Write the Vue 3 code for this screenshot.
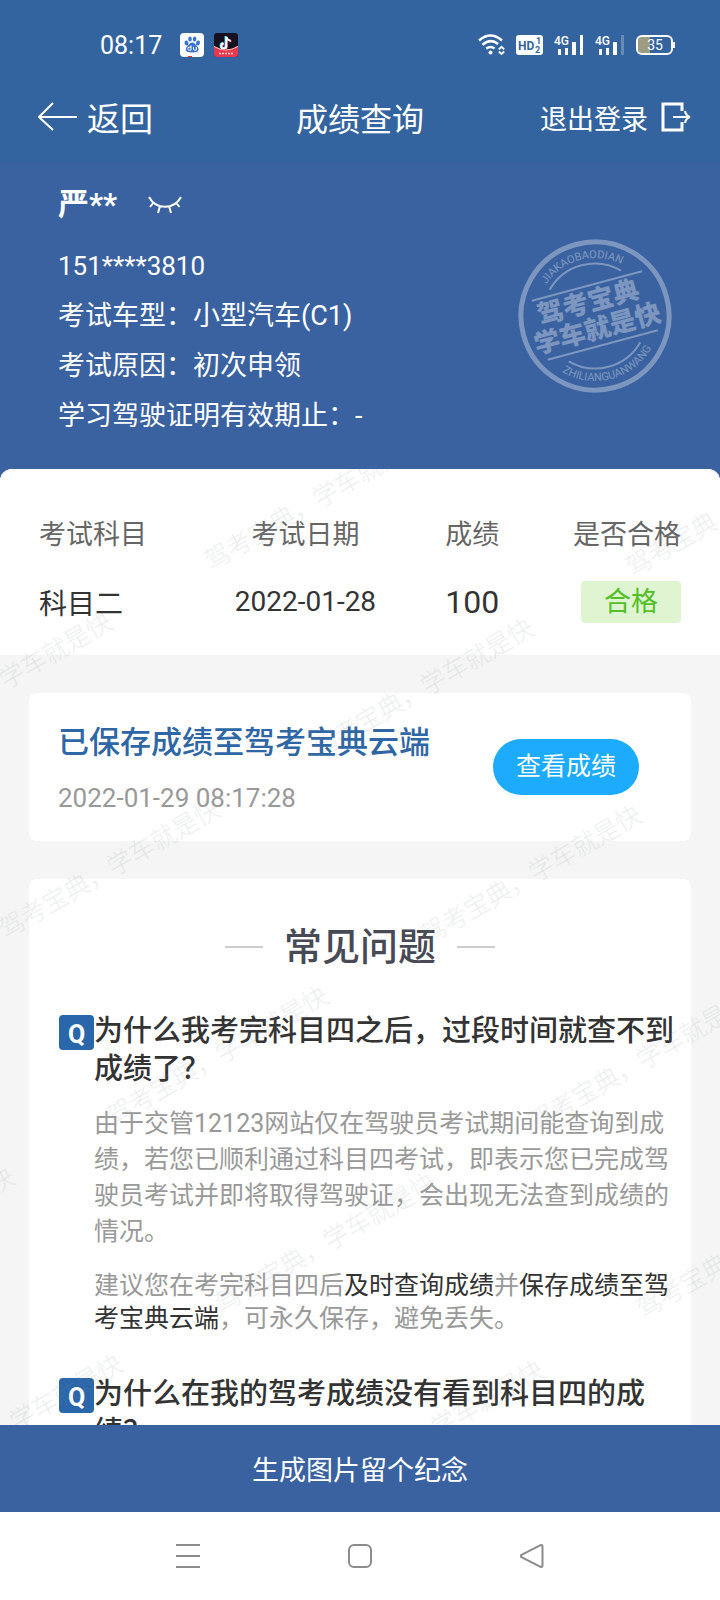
<script setup>
import { ref, computed } from 'vue'

const hidden = ref(true)
const name = computed(() => hidden.value ? '严**' : '严')

const profile = ref([
    '151****3810',
    '考试车型：小型汽车(C1)',
    '考试原因：初次申领',
    '学习驾驶证明有效期止：-'
])

const results = ref([
    { subject: '科目二', date: '2022-01-28', score: 100, status: '合格' }
])

const savedAt = ref('2022-01-29 08:17:28')

function toggleHidden() {
    hidden.value = !hidden.value
}
</script>

<template>
    <div class="app">
        <div class="status">
            <span class="time">08:17</span>
            <svg class="app-icon" width="24" height="24" viewBox="0 0 24 24">
                <rect width="24" height="24" rx="4" fill="#fff" />
                <g fill="#3a73cf">
                    <ellipse cx="6.5" cy="10" rx="1.9" ry="2.6" transform="rotate(-15 6.5 10)" />
                    <ellipse cx="10" cy="6" rx="1.8" ry="2.6" />
                    <ellipse cx="14.6" cy="6" rx="1.8" ry="2.6" />
                    <ellipse cx="18" cy="10" rx="1.9" ry="2.6" transform="rotate(15 18 10)" />
                    <path d="M12.2 9.500c2.300 0 3 2 4.500 3.400 1.600 1.400 2.200 2.500 1.800 4.200-.5 2-2.600 2.300-6.300 2.300s-5.800-.3-6.300-2.300c-.4-1.700.3-2.800 1.800-4.200 1.500-1.400 2.200-3.400 4.500-3.400z" />
                </g>
                <path d="M11 12.500v4.700H9.300a1.500 1.500 0 0 1 0-3H11M13.500 14v2.200c0 .7.500 1 1.200 1h1.600V14" fill="none" stroke="#fff" stroke-width="1" />
                <path d="M8 24v-1h4v1z" fill="#e33" />
            </svg>
            <svg class="app-icon" width="24" height="24" viewBox="0 0 24 24">
                <rect width="24" height="24" rx="3" fill="#17101f" />
                <path d="M0 13q12 7 24 0v8a3 3 0 0 1-3 3H3a3 3 0 0 1-3-3z" fill="#e8384f" />
                <path d="M0 13.500q12 7 24 0" fill="none" stroke="#ffc9b8" stroke-width="1" />
                <path d="M5 20.500h14" stroke="#ffd5cf" stroke-width="1.500" stroke-dasharray="2 1" />
                <g fill="none" stroke-width="2">
                    <path d="M11.500 3v9.500a2.500 2.500 0 1 1-2.500-2.500M11.500 3c.3 2.500 2 4 4.500 4.200" stroke="#29e0e6" />
                    <path d="M13 4v9.500a2.500 2.500 0 1 1-2.500-2.500M13 4c.3 2.500 2 4 4.500 4.200" stroke="#f2355f" />
                    <path d="M12.300 3.500v9.500a2.500 2.500 0 1 1-2.500-2.500M12.300 3.500c.3 2.500 2 4 4.500 4.200" stroke="#fff" />
                </g>
            </svg>

            <div class="signals">
                <svg width="27" height="22" viewBox="0 0 27 22" fill="none" stroke="#fff" stroke-width="2.600">
                    <path d="M1 6.500Q12.500-3.500 24 6.500M4.500 10.800Q12.500 4 20 10M8.300 14.600Q12.500 11.500 16.500 14.500" />
                    <circle cx="12.500" cy="18.500" r="2" fill="#fff" stroke="none" />
                    <path d="M20.800 15.300l2.700-2.500 2.700 2.500M20.800 17.500l2.700 2.500 2.700-2.500" stroke-width="1.800" />
                </svg>
                <svg width="27" height="22" viewBox="0 0 27 22">
                    <rect y="1" width="27" height="20" rx="3" fill="#fff" />
                    <g fill="#35649f" font-family="Roboto, sans-serif" font-weight="700">
                        <text x="2" y="16" font-size="12">HD</text>
                        <text x="20" y="10" font-size="9">1</text>
                        <text x="19" y="19" font-size="9">2</text>
                    </g>
                </svg>
                <svg v-for="bars in [4, 3]" :key="bars" width="30" height="22" viewBox="0 0 30 22" fill="#fff">
                    <text x="0" y="11" font-size="12" font-weight="500" font-family="Roboto, sans-serif">4G</text>
                    <rect x="4" y="15" width="3" height="6" />
                    <rect x="11" y="14" width="3" height="7" />
                    <rect x="18" y="8" width="4" height="13" />
                    <rect x="26" y="1" width="3" height="20" :opacity="bars === 4 ? 1 : 0.25" />
                </svg>
                <svg width="40" height="22" viewBox="0 0 40 22">
                    <path d="M7 2h7v18H7a5 5 0 0 1-5-5V7a5 5 0 0 1 5-5z" fill="#9d9c83" />
                    <rect x="1" y="2" width="35" height="18" rx="5" fill="none" stroke="#fff" stroke-width="2" />
                    <path d="M38 8v6" stroke="#fff" stroke-width="2" />
                    <text x="19" y="16" font-size="14" text-anchor="middle" fill="#fff" font-family="Roboto, sans-serif">35</text>
                </svg>
            </div>
        </div>

        <header class="navbar">
            <button class="back">
                <svg width="40" height="30" viewBox="0 0 40 30" fill="none" stroke="currentColor" stroke-width="2">
                    <path d="M39 15H1M15 1L1 15l14 13" />
                </svg>
                返回
            </button>
            <h1>成绩查询</h1>
            <button class="logout">
                退出登录
                <svg width="30" height="30" viewBox="0 0 30 30" fill="none" stroke="currentColor" stroke-width="3">
                    <path d="M21 9V2H2v26h19v-8" />
                    <path d="M12 15h17M24 9q1 5 5 6q-4 1-5 6" stroke-width="2" />
                </svg>
            </button>
        </header>

        <section class="profile">
            <div>
                <h2>
                    {{ name }}
                    <button class="eye" aria-label="显示或隐藏" @click="toggleHidden">
                        <svg width="36" height="22" viewBox="0 0 36 22" fill="none" stroke="currentColor" stroke-width="2">
                            <path d="M2 3c7 13 25 13 32 0M7 8l-4 5M13 12l-2 7M22 12l2 7M28.500 8l4 5" />
                        </svg>
                    </button>
                </h2>
                <p v-for="line in profile" :key="line">{{ line }}</p>
            </div>

            <svg class="stamp" width="154" height="154" viewBox="0 0 154 154">
                <g transform="rotate(-15 77 77)" fill="none" stroke="#fff">
                    <circle cx="77" cy="77" r="74" stroke-width="5" />
                    <path d="M20 46h114M20 107h114M40 40A52 52 0 0 1 114 40M40 114A52 52 0 0 0 114 114" stroke-width="2" />
                    <path id="ring-top" d="M19 77A58 58 0 0 1 135 77" stroke="none" />
                    <path id="ring-bottom" d="M12 77A65 65 0 0 0 142 77" stroke="none" />
                    <g fill="#fff" stroke="none" text-anchor="middle">
                        <text class="ring"><textPath href="#ring-top" startOffset="50%">JIAKAOBAODIAN</textPath></text>
                        <text class="ring"><textPath href="#ring-bottom" startOffset="50%">ZHILIANGUANWANG</textPath></text>
                        <text class="slogan" x="74" y="71">驾考宝典</text>
                        <text class="slogan" x="76" y="99">学车就是快</text>
                    </g>
                </g>
            </svg>
        </section>

        <main class="body">
            <div class="scroll">
                <div class="panel">
                    <table>
                        <thead>
                            <tr>
                                <th class="subject">考试科目</th>
                                <th class="date">考试日期</th>
                                <th class="score">成绩</th>
                                <th class="result">是否合格</th>
                            </tr>
                        </thead>
                        <tbody>
                            <tr v-for="row in results" :key="row.subject">
                                <td class="subject">{{ row.subject }}</td>
                                <td class="date">{{ row.date }}</td>
                                <td class="score">{{ row.score }}</td>
                                <td class="result"><span class="tag">{{ row.status }}</span></td>
                            </tr>
                        </tbody>
                    </table>
                </div>

                <section class="card saved">
                    <div>
                        <h3>已保存成绩至驾考宝典云端</h3>
                        <time>{{ savedAt }}</time>
                    </div>
                    <button>查看成绩</button>
                </section>

                <section class="card faq">
                    <h2>常见问题</h2>
                    <article>
                        <span class="q">Q</span>
                        <div>
                            <h3>为什么我考完科目四之后，过段时间就查不到成绩了？</h3>
                            <p>由于交管12123网站仅在驾驶员考试期间能查询到成绩，若您已顺利通过科目四考试，即表示您已完成驾驶员考试并即将取得驾驶证，会出现无法查到成绩的情况。</p>
                            <p class="tip">建议您在考完科目四后<strong>及时查询成绩</strong>并<strong>保存成绩至驾考宝典云端</strong>，可永久保存，避免丢失。</p>
                        </div>
                    </article>
                    <article>
                        <span class="q">Q</span>
                        <div>
                            <h3>为什么在我的驾考成绩没有看到科目四的成绩？</h3>
                        </div>
                    </article>
                </section>
            </div>

            <svg class="watermark" width="100%" height="100%">
                <defs>
                    <pattern id="mark" width="362" height="216" patternUnits="userSpaceOnUse" patternTransform="translate(217 88) rotate(-30) translate(-42 -100)">
                        <text x="30" y="109">驾考宝典，学车就是快</text>
                    </pattern>
                </defs>
                <rect width="100%" height="100%" fill="url(#mark)" />
            </svg>
        </main>

        <button class="generate">生成图片留个纪念</button>

        <nav class="system">
            <button aria-label="菜单">
                <svg width="24" height="24" viewBox="0 0 24 24"><path d="M0 1h24M0 12h24M0 23h24" /></svg>
            </button>
            <button aria-label="主页">
                <svg width="24" height="24" viewBox="0 0 24 24"><rect x="1" y="1" width="22" height="22" rx="5" /></svg>
            </button>
            <button aria-label="返回">
                <svg width="24" height="24" viewBox="0 0 24 24"><path d="M1.500 10.800L20.500 1.200Q22.500.5 22.500 2.500v19q0 2-2 1.300L1.500 13.200Q0 12 1.500 10.800z" /></svg>
            </button>
        </nav>
    </div>
</template>

<style>
    body {
        background: #fff;
    }
</style>

<style scoped>
    .app {
        display: flex;
        flex-direction: column;
        height: 100vh;
        background: #3b62a0;
        color: #fff;
        font-family: Roboto, "Noto Sans CJK SC", sans-serif;
        font-size: 27px;
    }
    h1, h2, h3, p {
        margin: 0;
    }
    button {
        padding: 0;
        border: 0;
        background: none;
        color: inherit;
        font: inherit;
        cursor: pointer;
    }
    svg {
        display: block;
        flex: none;
    }

    .status {
        display: flex;
        align-items: center;
        height: 90px;
        padding: 0 44px 0 100px;
        background: #34649f;
    }
    .time {
        margin-right: 18px;
        font-size: 25px;
    }
    .app-icon {
        margin-right: 10px;
    }
    .signals {
        display: flex;
        gap: 11px;
        margin-left: auto;
    }

    .navbar {
        display: grid;
        grid-template-columns: 1fr auto 1fr;
        align-items: center;
        height: 54px;
        padding: 0 29px 19px;
        background: #34649f;
    }
    .navbar h1 {
        font-size: 32px;
        font-weight: 400;
    }
    .back, .logout {
        display: flex;
        align-items: center;
    }
    .back {
        gap: 9px;
        padding-left: 9px;
        font-size: 33px;
    }
    .logout {
        justify-self: end;
        gap: 13px;
    }

    .profile {
        display: flex;
        justify-content: space-between;
        align-items: center;
        padding: 28px 48px 28px 58px;
    }
    .profile h2 {
        display: flex;
        align-items: center;
        gap: 30px;
        margin-bottom: 22px;
        font-size: 31px;
        line-height: 28px;
    }
    .profile p {
        line-height: 50px;
    }
    .profile p:first-of-type {
        font-size: 26px;
    }
    .stamp {
        opacity: 0.33;
    }
    .ring {
        font-size: 11px;
    }
    .slogan {
        font-size: 26px;
        font-weight: 900;
    }

    .body {
        position: relative;
        flex: 1;
        min-height: 0;
        overflow: hidden;
        border-radius: 12px 12px 0 0;
        background: #f5f5f5;
        color: #333;
    }
    .scroll {
        height: 100%;
        overflow-y: auto;
        scrollbar-width: none;
    }
    .watermark {
        position: absolute;
        inset: 0;
        pointer-events: none;
    }
    .watermark text {
        font-size: 25px;
        font-weight: 300;
        fill: rgba(130, 145, 150, 0.17);
    }

    .panel {
        padding: 28px 39px 19px;
        background: #fff;
    }
    table {
        width: 100%;
        table-layout: fixed;
        border-collapse: collapse;
    }
    th, td {
        padding: 0;
        text-align: center;
    }
    th {
        height: 70px;
        color: #666;
        font-weight: 400;
    }
    td {
        height: 69px;
        font-size: 28px;
    }
    .subject {
        width: 25%;
        text-align: left;
    }
    .date {
        width: 33%;
    }
    .score {
        width: 19%;
    }
    td.score {
        font-size: 32px;
    }
    .result {
        text-align: right;
    }
    .tag {
        display: inline-block;
        width: 100px;
        border-radius: 4px;
        background: #dff5d2;
        color: #52c026;
        font-size: 27px;
        line-height: 42px;
        text-align: center;
    }

    .card {
        margin: 38px 29px 0;
        border-radius: 8px;
        background: #fff;
    }
    .saved {
        display: flex;
        justify-content: space-between;
        align-items: center;
        padding: 25px 52px 25px 29px;
    }
    .saved h3 {
        margin-bottom: 12px;
        color: #2f66a5;
        font-size: 31px;
        font-weight: 500;
        line-height: 50px;
    }
    .saved time {
        display: block;
        color: #999;
        font-size: 26px;
        line-height: 36px;
    }
    .saved button {
        width: 146px;
        border-radius: 28px;
        background: #1dabfe;
        color: #fff;
        font-size: 25px;
        line-height: 56px;
    }

    .faq {
        padding: 40px 13px 40px 30px;
    }
    .faq h2 {
        display: flex;
        justify-content: center;
        align-items: center;
        gap: 21px;
        margin: 0 17px 37px 0;
        color: #474a54;
        font-size: 38px;
        font-weight: 500;
        line-height: 56px;
    }
    .faq h2::before, .faq h2::after {
        content: "";
        width: 38px;
        height: 2px;
        background: #ccc;
    }
    article {
        display: flex;
        margin-bottom: 40px;
    }
    .q {
        flex: none;
        width: 35px;
        height: 35px;
        margin-top: 3px;
        border-radius: 4px;
        background: #2a66aa;
        color: #fff;
        font-size: 25px;
        font-weight: 700;
        line-height: 40px;
        text-align: center;
    }
    article h3 {
        font-size: 29px;
        font-weight: 500;
        line-height: 38px;
    }
    article p {
        margin-top: 18px;
        color: #999;
        font-size: 25px;
        line-height: 36px;
    }
    article .tip {
        margin-top: 19px;
        line-height: 33px;
    }
    strong {
        color: #333;
        font-weight: 400;
    }

    .generate {
        height: 87px;
        flex: none;
    }
    .system {
        display: flex;
        justify-content: center;
        align-items: center;
        gap: 148px;
        flex: none;
        height: 88px;
        background: #fff;
    }
    .system svg {
        fill: none;
        stroke: #8c8c8c;
        stroke-width: 2;
    }
</style>
